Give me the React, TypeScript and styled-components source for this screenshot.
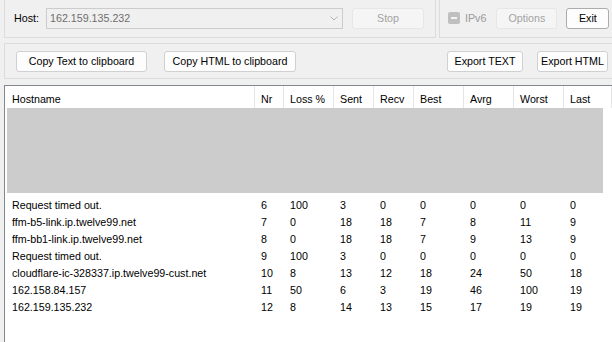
import styled, { createGlobalStyle } from "styled-components";

const GlobalStyle = createGlobalStyle`
  html, body {
    margin: 0;
    padding: 0;
    background: #f0f0f0;
    overflow: hidden;
  }
  body {
    font-family: "Liberation Sans", Arial, sans-serif;
    font-size: 10.7px;
    color: #000;
  }
`;

type Hop = {
  host: string;
  nr: number;
  loss: number;
  sent: number;
  recv: number;
  best: number;
  avrg: number;
  worst: number;
  last: number;
};

const hops: Hop[] = [
  { host: "Request timed out.", nr: 6, loss: 100, sent: 3, recv: 0, best: 0, avrg: 0, worst: 0, last: 0 },
  { host: "ffm-b5-link.ip.twelve99.net", nr: 7, loss: 0, sent: 18, recv: 18, best: 7, avrg: 8, worst: 11, last: 9 },
  { host: "ffm-bb1-link.ip.twelve99.net", nr: 8, loss: 0, sent: 18, recv: 18, best: 7, avrg: 9, worst: 13, last: 9 },
  { host: "Request timed out.", nr: 9, loss: 100, sent: 3, recv: 0, best: 0, avrg: 0, worst: 0, last: 0 },
  { host: "cloudflare-ic-328337.ip.twelve99-cust.net", nr: 10, loss: 8, sent: 13, recv: 12, best: 18, avrg: 24, worst: 50, last: 18 },
  { host: "162.158.84.157", nr: 11, loss: 50, sent: 6, recv: 3, best: 19, avrg: 46, worst: 100, last: 19 },
  { host: "162.159.135.232", nr: 12, loss: 8, sent: 14, recv: 13, best: 15, avrg: 17, worst: 19, last: 19 },
];

const columns = ["Hostname", "Nr", "Loss %", "Sent", "Recv", "Best", "Avrg", "Worst", "Last"];

const App = () => {
  return (
    <Window>
      <GlobalStyle />

      <TopRow>
        <HostGroup>
          <HostLabel>Host:</HostLabel>
          <ComboBox>
            <ComboText>162.159.135.232</ComboText>
            <ComboArrow>
              <svg width="8" height="5" viewBox="0 0 8 5">
                <path d="M0.5 0.5 L4 4 L7.5 0.5" fill="none" stroke="#b4b4b4" strokeWidth="1" />
              </svg>
            </ComboArrow>
          </ComboBox>
          <Button $width={72} disabled>Stop</Button>
        </HostGroup>

        <OptionsGroup>
          <CheckLabel>
            <CheckBox />
            IPv6
          </CheckLabel>
          <Button $width={61} disabled>Options</Button>
          <Button $width={43} $strong>Exit</Button>
        </OptionsGroup>
      </TopRow>

      <ExportGroup>
        <Button $width={131}>Copy Text to clipboard</Button>
        <Button $width={132}>Copy HTML to clipboard</Button>
        <Spacer />
        <Button $width={76}>Export TEXT</Button>
        <Button $width={71}>Export HTML</Button>
      </ExportGroup>

      <ListView>
        <HeaderRow>
          {columns.map((c) => (
            <HeaderCell key={c}>{c}</HeaderCell>
          ))}
        </HeaderRow>
        <Redacted />
        {hops.map((h) => (
          <Row key={h.nr}>
            <Cell>{h.host}</Cell>
            <Cell>{h.nr}</Cell>
            <Cell>{h.loss}</Cell>
            <Cell>{h.sent}</Cell>
            <Cell>{h.recv}</Cell>
            <Cell>{h.best}</Cell>
            <Cell>{h.avrg}</Cell>
            <Cell>{h.worst}</Cell>
            <Cell>{h.last}</Cell>
          </Row>
        ))}
      </ListView>
    </Window>
  );
};

export default App;

// ===== styles =====

const Window = styled.div`
  width: 612px;
  height: 342px;
  overflow: hidden;
  background: #f0f0f0;
`;

const TopRow = styled.div`
  display: flex;
  gap: 3px;
  padding-left: 4px;
  height: 38px;
`;

const GroupBase = styled.div`
  border: 1px solid #dcdcdc;
  border-top: none;
  display: flex;
  align-items: center;
  box-sizing: border-box;
`;

const HostGroup = styled(GroupBase)`
  width: 432px;
  height: 38px;
  padding: 0 0 1px 9px;
`;

const OptionsGroup = styled(GroupBase)`
  flex: 1;
  height: 38px;
  border-right: none;
  padding: 0 0 1px 8px;
`;

const HostLabel = styled.span`
  width: 32px;
`;

const ComboBox = styled.div`
  width: 297px;
  height: 21px;
  box-sizing: border-box;
  border: 1px solid #cccccc;
  background: #f0f0f0;
  display: flex;
  align-items: center;
  margin-right: 9px;
`;

const ComboText = styled.span`
  flex: 1;
  padding-left: 3px;
  color: #6d6d6d;
`;

const ComboArrow = styled.span`
  width: 17px;
  height: 100%;
  display: flex;
  align-items: center;
  justify-content: center;
`;

const Button = styled.button<{ $width: number; $strong?: boolean }>`
  width: ${(p) => p.$width}px;
  height: 21px;
  box-sizing: border-box;
  padding: 0;
  margin-right: ${(p) => (p.$strong ? 0 : 9)}px;
  font: inherit;
  color: #000;
  background: #fdfdfd;
  border: 1px solid ${(p) => (p.$strong ? "#acacac" : "#d0d0d0")};
  border-radius: 3px;

  &:disabled {
    color: #a3a3a3;
    background: #f5f5f5;
    border-color: #e6e6e6;
  }
`;

const CheckLabel = styled.label`
  display: flex;
  align-items: center;
  gap: 5px;
  color: #9a9a9a;
  margin-right: 10px;
`;

const CheckBox = styled.span`
  width: 12px;
  height: 12px;
  border-radius: 2px;
  background: #bfbfbf;
  display: flex;
  align-items: center;
  justify-content: center;

  &::after {
    content: "";
    width: 6px;
    height: 2px;
    background: #f4f4f4;
  }
`;

const ExportGroup = styled.div`
  margin: 5px 0 0 4px;
  height: 36px;
  box-sizing: border-box;
  border: 1px solid #dcdcdc;
  border-right: none;
  display: flex;
  align-items: center;
  padding: 0 0 0 11px;

  & > button {
    margin-right: 17px;
  }
  & > button:nth-of-type(3) {
    margin-right: 14px;
  }
  & > button:last-child {
    margin-right: 4px;
  }
`;

const Spacer = styled.div`
  flex: 1;
`;

const ListView = styled.div`
  margin: 6px 0 0 4px;
  height: 400px;
  background: #fff;
  border-top: 1px solid #828790;
  border-left: 1px solid #828790;
`;

const gridColumns = "250px 29px 50px 40px 40px 50px 50px 50px 1fr";

const HeaderRow = styled.div`
  display: grid;
  grid-template-columns: ${gridColumns};
  height: 22px;
`;

const HeaderCell = styled.div`
  border-right: 1px solid #e5e5e5;
  padding: 4px 0 0 6px;
  line-height: 18px;
  white-space: nowrap;

  &:first-child {
    padding-left: 7px;
  }
`;

const Redacted = styled.div`
  width: 596px;
  height: 85px;
  margin: 0 0 4px 2px;
  background: #cccccc;
`;

const Row = styled.div`
  display: grid;
  grid-template-columns: ${gridColumns};
  height: 17px;
  line-height: 17px;
`;

const Cell = styled.div`
  padding-left: 6px;
  white-space: nowrap;

  &:first-child {
    padding-left: 7px;
  }
`;
